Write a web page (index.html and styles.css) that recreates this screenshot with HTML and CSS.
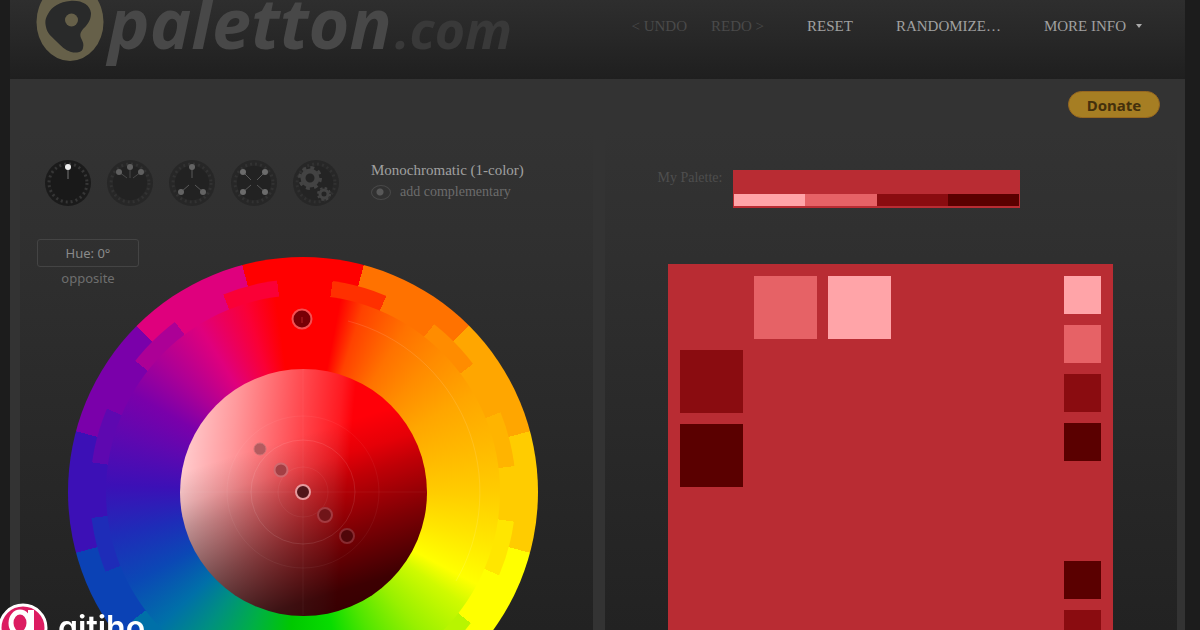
FILE: index.html
```html
<!DOCTYPE html>
<html lang="en">
<head>
<meta charset="utf-8">
<title>Paletton.com</title>
<link rel="stylesheet" href="styles.css">
</head>
<body>
<div class="app">
  <header class="header">
    <a class="logo" href="#">
      <svg class="logo-mark" viewBox="0 0 68 80" aria-hidden="true">
        <ellipse cx="34" cy="37" rx="33.500" ry="39" fill="#666049"/>
        <path d="M34 16C46 15 54 20 55 28C55 34 53 37 50 41C46 45 43 48 45 53C47 57 48 59 47 63C46 68 40 68 35 67C29 65 25 61 20 56C15 51 11 48 10 42C9 37 9 34 12 29C16 21 24 17 34 16Z" fill="#292a2a"/>
        <circle cx="35.500" cy="35" r="6.500" fill="#666049"/>
      </svg>
      <span class="logo-name">paletton</span><span class="logo-tld">.com</span>
    </a>
    <nav class="nav">
      <button class="nav-item nav-undo" disabled>&lt; UNDO</button>
      <button class="nav-item nav-redo" disabled>REDO &gt;</button>
      <button class="nav-item">RESET</button>
      <button class="nav-item">RANDOMIZE…</button>
      <button class="nav-item nav-more">MORE INFO
        <svg width="8" height="6" viewBox="0 0 8 6" aria-hidden="true"><path d="M1 1H7L4 5Z" fill="#aaa"/></svg>
      </button>
    </nav>
  </header>

  <main class="main">
    <div class="donate-row"><button class="donate">Donate</button></div>

    <section class="panel">
      <div class="schemes">
        <div class="scheme-list">
          <button class="scheme" aria-label="Monochromatic">
            <svg viewBox="0 0 48 48"><circle cx="24" cy="24" r="23" fill="#1b1b1b"/><circle cx="24" cy="24" r="19" fill="none" stroke="#363636" stroke-width="3" stroke-dasharray="2 3"/><circle cx="24" cy="24" r="17" fill="#191919"/><path d="M24 9V20" stroke="#777"/><circle cx="24" cy="8" r="3" fill="#eee"/></svg>
          </button>
          <button class="scheme" aria-label="Adjacent colors">
            <svg viewBox="0 0 48 48"><circle cx="24" cy="24" r="23" fill="#272727"/><circle cx="24" cy="24" r="19" fill="none" stroke="#323232" stroke-width="3" stroke-dasharray="2 3"/><circle cx="24" cy="24" r="17" fill="#222"/><path d="M24 8V19M13 13L21 19M35 13L27 19" stroke="#484848"/><g fill="#606060"><circle cx="24" cy="8" r="3"/><circle cx="13" cy="13" r="3"/><circle cx="35" cy="13" r="3"/></g></svg>
          </button>
          <button class="scheme" aria-label="Triad">
            <svg viewBox="0 0 48 48"><circle cx="24" cy="24" r="23" fill="#272727"/><circle cx="24" cy="24" r="19" fill="none" stroke="#323232" stroke-width="3" stroke-dasharray="2 3"/><circle cx="24" cy="24" r="17" fill="#222"/><path d="M24 8V19M13 33L21 26M35 33L27 26" stroke="#585858"/><g fill="#646464"><circle cx="24" cy="8" r="3"/><circle cx="13" cy="33" r="3"/><circle cx="35" cy="33" r="3"/></g></svg>
          </button>
          <button class="scheme" aria-label="Tetrad">
            <svg viewBox="0 0 48 48"><circle cx="24" cy="24" r="23" fill="#272727"/><circle cx="24" cy="24" r="19" fill="none" stroke="#323232" stroke-width="3" stroke-dasharray="2 3"/><circle cx="24" cy="24" r="17" fill="#222"/><path d="M13 13L21 21M35 13L27 21M13 33L21 26M35 33L27 26" stroke="#585858"/><g fill="#6c6c6c"><circle cx="13" cy="13" r="3"/><circle cx="35" cy="13" r="3"/><circle cx="13" cy="33" r="3"/><circle cx="35" cy="33" r="3"/></g></svg>
          </button>
          <button class="scheme" aria-label="Freestyle">
            <svg viewBox="0 0 48 48"><circle cx="24" cy="24" r="23" fill="#272727"/><circle cx="24" cy="24" r="19" fill="none" stroke="#313131" stroke-width="3" stroke-dasharray="2 3"/><circle cx="24" cy="24" r="17" fill="#242424"/><g fill="none" stroke="#434343"><circle cx="18" cy="19" r="7" stroke-width="5"/><circle cx="18" cy="19" r="10.500" stroke-width="3" stroke-dasharray="4 4.247"/><circle cx="32" cy="35" r="4" stroke-width="3"/><circle cx="32" cy="35" r="6" stroke-width="2" stroke-dasharray="2.500 2.210"/></g></svg>
          </button>
        </div>
        <div class="scheme-info">
          <div class="scheme-name">Monochromatic (1-color)</div>
          <label class="complement">
            <input class="complement-box" type="checkbox"><span>add complementary</span>
          </label>
        </div>
      </div>

      <div class="picker">
        <div class="wheel">
          <div class="ring-mid">
            <div class="ring-hue">
              <div class="shade"></div>
            </div>
          </div>
          <svg class="handles" viewBox="0 0 470 470" aria-hidden="true">
            <g fill="none" stroke="#fff">
              <g stroke-opacity=".05"><circle cx="235" cy="235" r="25"/><circle cx="235" cy="235" r="76"/><path d="M112 235H358M235 112V358"/></g>
              <circle cx="235" cy="235" r="52" stroke-opacity=".1"/>
              <path d="M280 64A177 177 0 0 1 388 324" stroke-opacity=".12"/>
            </g>
            <circle cx="192" cy="192" r="6" fill="#b45b5f" stroke="#cc7376"/>
            <circle cx="213" cy="213" r="6.500" fill="#a33f44" stroke="#cf696e" stroke-width="2"/>
            <circle cx="235" cy="235" r="7" fill="#501519" stroke="#e59a9d" stroke-width="2"/>
            <circle cx="257" cy="258" r="7" fill="#701418" stroke="#a43a40" stroke-width="2"/>
            <circle cx="279" cy="279" r="7" fill="#500609" stroke="#882a30" stroke-width="2"/>
            <circle cx="234" cy="62" r="9.500" fill="#780006" stroke="#f25052" stroke-width="2"/>
            <path d="M234 60V66" stroke="#b02024"/>
          </svg>
        </div>
        <div class="hue">
          <button class="hue-value">Hue: 0°</button>
          <a class="hue-opposite" href="#">opposite</a>
        </div>
      </div>
    </section>

    <section class="panel">
      <div class="mine">
        <span class="mine-label">My Palette:</span>
        <div class="bar">
          <i class="tone-lightest"></i><i class="tone-light"></i><i class="tone-dark"></i><i class="tone-darkest"></i>
        </div>
      </div>
      <div class="preview">
        <div class="blocks">
          <i></i><i class="tone-light"></i><i class="tone-lightest"></i>
          <i class="tone-dark"></i><i></i><i></i>
          <i class="tone-darkest"></i>
        </div>
        <div class="chips">
          <div class="chip-set"><i class="tone-lightest"></i><i class="tone-light"></i><i class="tone-dark"></i><i class="tone-darkest"></i></div>
          <div class="chip-set"><i class="tone-darkest"></i><i class="tone-dark"></i><i class="tone-light"></i><i class="tone-lightest"></i></div>
        </div>
      </div>
    </section>
  </main>
</div>

<div class="brand">
  <svg class="brand-mark" viewBox="0 0 52 52" aria-hidden="true"><circle cx="26" cy="26" r="23" fill="#dc1c61" stroke="#fff" stroke-width="3"/><ellipse cx="23" cy="21" rx="9" ry="11" fill="none" stroke="#fff" stroke-width="5"/><path d="M34 8V36Q33 44 22 43" fill="none" stroke="#fff" stroke-width="6"/></svg>
  <span>gitiho</span>
</div>
</body>
</html>
```
FILE: styles.css
```css
* { box-sizing: border-box; }

body {
  margin: 0;
  height: 100vh;
  overflow: hidden;
  background: #1c1c1c;
  font-family: "Liberation Serif", serif;
}

button {
  padding: 0;
  border: 0;
  background: none;
  font: inherit;
  color: inherit;
}

.app {
  display: flex;
  flex-direction: column;
  min-height: 100vh;
  margin: 0 15px 0 10px;
}

.header {
  display: flex;
  justify-content: space-between;
  height: 79px;
  padding: 0 42px 0 26px;
  overflow: hidden;
  background: linear-gradient(#2e2e2e, #272727 50%, #1f1f1f);
}

.logo {
  display: flex;
  align-items: baseline;
  height: 79px;
  font-family: "Open Sans", "Noto Sans", sans-serif;
  font-style: italic;
  font-weight: 700;
  line-height: 44px;
  text-decoration: none;
}

.logo-mark {
  align-self: flex-start;
  width: 68px;
  height: 80px;
  margin: -15px 4px 0 0;
}

.logo-name {
  font-size: 70px;
  color: #484848;
}

.logo-tld {
  margin-left: 3px;
  font-size: 52px;
  color: #393939;
}

.nav {
  display: flex;
  align-items: center;
  gap: 43px;
  height: 52px;
  font-size: 15px;
  color: #a0a0a0;
}

.nav-item { white-space: nowrap; }
.nav-undo, .nav-redo { color: #4a4a4a; }
.nav-undo { margin-right: -19px; }

.nav-more {
  display: flex;
  align-items: center;
  gap: 9px;
}

.main {
  flex: 1;
  display: grid;
  grid-template-columns: 1fr 1fr;
  grid-template-rows: auto 1fr;
  column-gap: 12px;
  padding: 12px 8px 0 10px;
  background: #333;
}

.donate-row {
  grid-column: 1 / -1;
  display: flex;
  justify-content: flex-end;
  padding: 0 17px 12px 0;
}

.donate {
  width: 92px;
  height: 27px;
  border: 1px solid #96661f;
  border-radius: 14px;
  background: #a67e23;
  font: 700 15px/24px "Noto Sans", sans-serif;
  color: #44300c;
}

.panel { background: linear-gradient(#333, #303030 100px, #222 500px); }

.schemes {
  display: flex;
  gap: 31px;
  padding: 29px 0 0 24px;
}

.scheme-list {
  display: flex;
  gap: 14px;
}

.scheme { height: 48px; }
.scheme svg { display: block; width: 48px; height: 48px; }

.scheme-name {
  font-size: 15px;
  line-height: 22px;
  color: #a0a0a0;
}

.complement {
  display: flex;
  align-items: center;
  gap: 9px;
  font-size: 14px;
  line-height: 22px;
  color: #6c6c6c;
}

.complement-box {
  appearance: none;
  width: 20px;
  height: 15px;
  margin: 0;
  border: 1px solid #484848;
  border-radius: 50%;
  background: radial-gradient(circle at 8px 6px, #585858 3px, transparent 4px);
}

.picker {
  display: grid;
  padding: 32px 0 0 17px;
}

.picker > * { grid-area: 1 / 1; }

.hue {
  justify-self: start;
  align-self: start;
  display: flex;
  flex-direction: column;
  align-items: center;
  width: 102px;
  font: 13px/22px "Noto Sans", sans-serif;
}

.hue-value {
  width: 100%;
  height: 28px;
  border: 1px solid #444;
  border-radius: 3px;
  color: #8a8a8a;
}

.hue-opposite {
  color: #6e6e6e;
  text-decoration: none;
}

.wheel {
  position: relative;
  width: 470px;
  height: 470px;
  margin: 18px 0 0 31px;
  padding: 22px;
  border-radius: 50%;
  background: conic-gradient(from -15deg,
    #f00 30deg, #ff7200 0 60deg, #ffa600 0 90deg, #fc0 0 120deg,
    #ff0 0 150deg, #60e800 0 180deg, #00c800 0 210deg, #00986e 0 240deg,
    #0b42b5 0 270deg, #3c10b6 0 300deg, #7a00aa 0 330deg, #df007d 0);
}

.ring-mid {
  height: 100%;
  padding: 16px;
  border-radius: 50%;
  background: conic-gradient(from -7deg,
    #f00 15deg, #ff3000 0 30deg, #ff7200 0 45deg, #ff8c00 0 60deg,
    #ffa600 0 75deg, #ffb400 0 90deg, #fc0 0 105deg, #ffe600 0 120deg,
    #ff0 0 135deg, #b8f500 0 150deg, #60e800 0 165deg, #20dc00 0 180deg,
    #00c800 0 195deg, #00b044 0 210deg, #00986e 0 225deg, #0070a8 0 240deg,
    #0b42b5 0 255deg, #1e2cb8 0 270deg, #3c10b6 0 285deg, #5e08b0 0 300deg,
    #7a00aa 0 315deg, #ac0096 0 330deg, #df007d 0 345deg, #fa0036 0);
}

.ring-hue {
  display: grid;
  place-items: center;
  height: 100%;
  border-radius: 50%;
  background: conic-gradient(
    #f00, #f00 11deg, #ff4200 18deg, #ff7200 32deg, #ff8c00 45deg,
    #ffa600 60deg, #ffb800 75deg, #fc0 90deg, #ffe600 105deg, #ff0 118deg,
    #d0fa00 125deg, #98f000 140deg, #50e600 155deg, #08dc00 168deg,
    #00c800 185deg, #00b044 200deg, #009080 215deg, #0070a8 227deg,
    #0b48b5 242deg, #1e2cb8 257deg, #3c10b6 272deg, #5e08b0 287deg,
    #7a00aa 300deg, #ac0096 313deg, #df007d 328deg, #fa0036 343deg, #f00 352deg);
}

.shade {
  width: 247px;
  height: 247px;
  border-radius: 50%;
  background:
    linear-gradient(163deg, transparent 32%, rgba(0, 0, 0, .1) 42%, rgba(0, 0, 0, .25) 50%, rgba(0, 0, 0, .5) 66%, rgba(0, 0, 0, .76) 84%, rgba(0, 0, 0, .82)),
    linear-gradient(95deg, rgba(255, 255, 255, .84), rgba(255, 255, 255, .6) 22%, rgba(255, 255, 255, .24) 50%, rgba(255, 255, 255, .1) 61%, transparent 66%),
    #ff0008;
}

.handles {
  position: absolute;
  inset: 0;
}

.tone-lightest { background: #ffa4a8; }
.tone-light { background: #e66266; }
.tone-dark { background: #8a0c10; }
.tone-darkest { background: #5a0000; }

.mine {
  display: flex;
  justify-content: space-between;
  padding: 40px 157px 0 53px;
}

.mine-label {
  font-size: 14px;
  line-height: 15px;
  color: #4e4e4e;
}

.bar {
  display: grid;
  grid-template-columns: repeat(4, 1fr);
  width: 287px;
  height: 38px;
  padding: 24px 1px 2px;
  background: #b92c33;
}

.preview {
  display: flex;
  justify-content: space-between;
  margin: 56px 64px 0 63px;
  padding: 12px;
  background: #b92c33;
}

.blocks {
  display: grid;
  grid-template-columns: repeat(3, 63px);
  grid-auto-rows: 63px;
  align-content: start;
  gap: 11px;
}

.chips {
  display: flex;
  flex-direction: column;
  gap: 100px;
}

.chip-set {
  display: grid;
  grid-template-columns: 37px;
  grid-auto-rows: 38px;
  gap: 11px;
}

.brand {
  position: fixed;
  left: -3px;
  bottom: -24px;
  display: flex;
  align-items: center;
  gap: 9px;
  font: 600 32px/52px Inter, sans-serif;
  color: #fff;
}

.brand-mark {
  width: 52px;
  height: 52px;
}
```
